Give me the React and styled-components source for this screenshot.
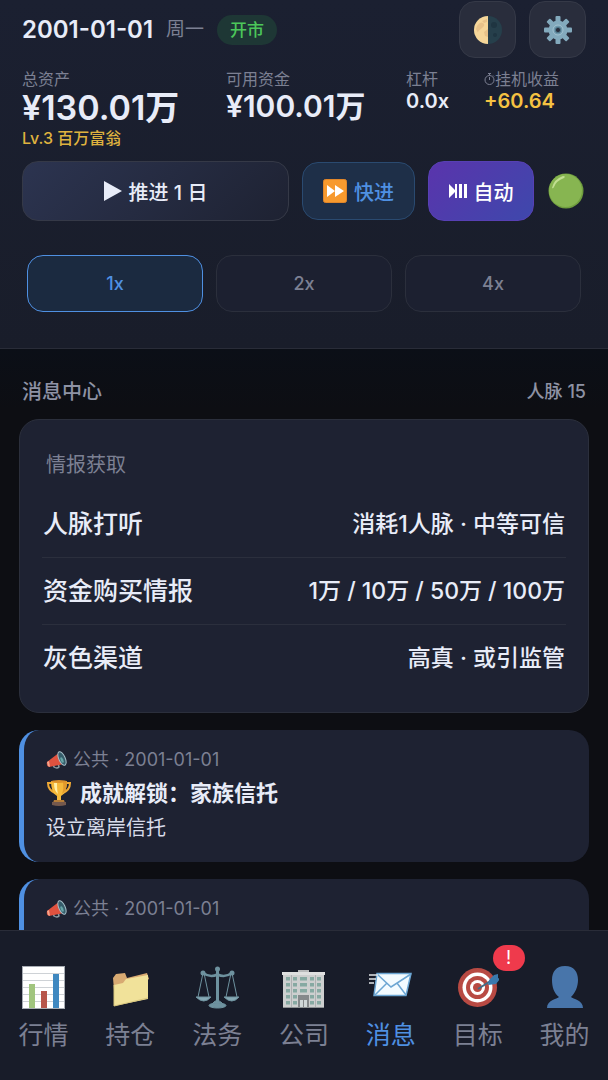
import React, { useState } from "react";
import styled, { createGlobalStyle, css } from "styled-components";

const GlobalStyle = createGlobalStyle`
	* {
		box-sizing: border-box;
	}
	body {
		margin: 0;
		background: #0d0e13;
		color: #e8ecf8;
		font-family: Inter, "Noto Sans CJK SC", sans-serif;
	}
	button {
		font-family: inherit;
		cursor: pointer;
	}
	svg {
		display: block;
		flex-shrink: 0;
	}
`;

const Page = styled.div`
	display: flex;
	flex-direction: column;
	height: 100vh;
	background: #0d0e13;
`;

const Header = styled.header`
	display: flex;
	flex-direction: column;
	flex-shrink: 0;
	padding: 1px 22px 36px;
	background: linear-gradient(#1b2031, #191d2a);
	border-bottom: 1px solid #292c38;
`;

const TopRow = styled.div`
	display: flex;
	align-items: center;
	gap: 13px;
`;

const DateText = styled.h1`
	margin: 0;
	font-size: 24px;
	font-weight: 600;
	line-height: 30px;
`;

const Weekday = styled.span`
	color: #7c8093;
	font-size: 19px;
	line-height: 30px;
`;

const MarketTag = styled.span`
	padding: 0 13px;
	border-radius: 15px;
	background: #1e3735;
	color: #4cc75a;
	font-size: 17px;
	font-weight: 500;
	line-height: 30px;
`;

const TopActions = styled.div`
	display: flex;
	gap: 13px;
	margin-left: auto;
`;

const IconButton = styled.button`
	display: flex;
	align-items: center;
	justify-content: center;
	width: 57px;
	height: 57px;
	padding: 0;
	border: 1px solid #353947;
	border-radius: 16px;
	background: #292d3c;
`;

const Stats = styled.dl`
	display: grid;
	grid-template-columns: 204fr 180fr 78fr 102fr;
	margin: 11px 0 0;
`;

const Stat = styled.div`
	white-space: nowrap;
`;

const StatLabel = styled.dt`
	display: flex;
	align-items: center;
	color: #7c8093;
	font-size: 16px;
	line-height: 20px;
`;

const valueSizes = {
	large: css`
		font-size: 34px;
		line-height: 37px;
	`,
	medium: css`
		font-size: 30px;
		line-height: 34px;
	`,
	small: css`
		font-size: 20px;
		line-height: 24px;
	`,
};

const StatValue = styled.dd`
	margin: 0;
	font-weight: 600;
	color: ${props => (props.$gold ? "#f5c242" : "#e8ecf8")};
	${props => valueSizes[props.$size]};
`;

const Level = styled.dd`
	margin: 0;
	color: #dfb23f;
	font-size: 16px;
	font-weight: 500;
	line-height: 24px;
`;

const Controls = styled.div`
	display: flex;
	align-items: center;
	gap: 13px;
	margin-top: 11px;
`;

const controlLooks = {
	step: css`
		flex: 1;
		border-color: #353947;
		background: linear-gradient(135deg, #2c3450, #1e2232);
		color: #e8ecf8;
	`,
	fast: css`
		width: 113px;
		height: 58px;
		border-color: #2a4a70;
		background: #1e2f48;
		color: #4f90e2;
	`,
	auto: css`
		width: 106px;
		border-color: #5740b4;
		background: linear-gradient(135deg, #5a34ac, #3e48ac);
		color: #ffffff;
	`,
};

const ControlButton = styled.button`
	display: flex;
	align-items: center;
	justify-content: center;
	gap: 7px;
	height: 60px;
	padding: 0;
	border: 1px solid;
	border-radius: 16px;
	font-size: 20px;
	font-weight: 500;
	white-space: nowrap;
	${props => controlLooks[props.$look]};
`;

const StatusButton = styled.button`
	width: 39px;
	padding: 0 1px;
	border: 0;
	background: none;
`;

const Speeds = styled.div`
	display: flex;
	gap: 13px;
	margin-top: 34px;
	padding: 0 5px;
`;

const SpeedButton = styled.button`
	flex: 1;
	height: 57px;
	border: 1px solid ${props => (props.$active ? "#4f90e2" : "#2b2f3c")};
	border-radius: 16px;
	background: ${props => (props.$active ? "#1b2a40" : "#1c2030")};
	color: ${props => (props.$active ? "#4f90e2" : "#7c8093")};
	font-size: 18px;
	font-weight: 500;
`;

const Main = styled.main`
	display: flex;
	flex: 1;
	flex-direction: column;
	gap: 17px;
	min-height: 0;
	padding: 28px 19px 0;
	overflow-y: auto;
	scrollbar-width: none;
	background: linear-gradient(#0b0f17, #0d0e13 60px);
`;

const SectionHead = styled.div`
	display: flex;
	align-items: center;
	justify-content: space-between;
	margin-bottom: -5px;
	padding: 0 3px;
	color: #8e92a4;
`;

const SectionTitle = styled.h2`
	margin: 0;
	font-size: 20px;
	font-weight: 500;
	line-height: 30px;
`;

const Contacts = styled.span`
	font-size: 18px;
	font-weight: 500;
	line-height: 30px;
`;

const Panel = styled.section`
	flex-shrink: 0;
	padding: 30px 22px 20px;
	border: 1px solid #2b2f3c;
	border-radius: 20px;
	background: #1e2232;
`;

const PanelTitle = styled.h3`
	margin: 0;
	padding: 0 4px 11px;
	color: #7c8093;
	font-size: 20px;
	font-weight: 400;
	line-height: 30px;
`;

const IntelRow = styled.button`
	display: flex;
	align-items: center;
	justify-content: space-between;
	width: 100%;
	height: 67px;
	padding: 0 1px 4px;
	border: 0;
	border-bottom: 1px solid #2b2f3d;
	background: none;
	color: #e8ecf8;
	font-size: 25px;
	font-weight: 500;
	&:last-child {
		border-bottom-color: transparent;
	}
`;

const IntelNote = styled.span`
	font-size: 23px;
`;

const Message = styled.article`
	display: flex;
	flex-direction: column;
	flex-shrink: 0;
	min-height: 132px;
	padding: 16px 22px 18px;
	border-left: 5px solid #4f90e2;
	border-radius: 20px;
	background: #1e2232;
`;

const MessageMeta = styled.div`
	display: flex;
	align-items: center;
	gap: 6px;
	color: #7c8093;
	font-size: 18px;
	line-height: 28px;
`;

const MessageTitle = styled.h3`
	display: flex;
	align-items: center;
	gap: 8px;
	margin: 0;
	font-size: 22px;
	font-weight: 600;
	line-height: 38px;
`;

const MessageBody = styled.p`
	margin: 0;
	color: #d8dcea;
	font-size: 20px;
	line-height: 32px;
`;

const TabBar = styled.nav`
	display: grid;
	grid-template-columns: repeat(7, 1fr);
	flex-shrink: 0;
	padding: 35px 0 27px;
	border-top: 1px solid #292c38;
	background: #181c29;
`;

const Tab = styled.a`
	display: flex;
	flex-direction: column;
	align-items: center;
	gap: 9px;
	position: relative;
	color: ${props => (props.$active ? "#4f90e2" : "#7c8093")};
	font-size: 25px;
	line-height: 35px;
	text-decoration: none;
`;

const Badge = styled.span`
	position: absolute;
	top: -21px;
	left: calc(50% + 15px);
	width: 32px;
	border-radius: 13px;
	background: #ef3a4c;
	color: #ffffff;
	font-size: 18px;
	line-height: 26px;
	text-align: center;
`;

const MoonIcon = () => (
	<svg width="28" height="28" viewBox="0 0 28 28">
		<circle cx="14" cy="14" r="14" fill="#263f4b" />
		<path d="M14 0a14 14 0 0 0 0 28z" fill="#f6d699" />
		<path d="M3 10q3-5 6-3t-1 5-4 4-2-3zM10 16l4-3v8l-3-1zM8 5l5-2v3l-3 1z" fill="#e8c289" />
		<circle cx="20" cy="9" r="3" fill="#1f3541" />
		<circle cx="21" cy="19" r="2" fill="#1f3541" />
	</svg>
);

const GearIcon = () => (
	<svg width="28" height="28" viewBox="0 0 28 28">
		<g fill="#83aabd">
			{[ 0, 45, 90, 135 ].map(angle => (
				<rect key={angle} x="11.5" y="0" width="5" height="28" rx="1" transform={`rotate(${angle} 14 14)`} />
			))}
			<circle cx="14" cy="14" r="9.5" />
		</g>
		<circle cx="14" cy="14" r="5" fill="#6e98ad" stroke="#a5c5d2" strokeWidth="1" />
		<circle cx="14" cy="14" r="2.6" fill="#292d3c" stroke="#4f7688" strokeWidth="1" />
	</svg>
);

const StopwatchIcon = () => (
	<svg width="11" height="16" viewBox="0 0 11 16" fill="none" stroke="#7c8093" strokeWidth="1">
		<circle cx="5.5" cy="9" r="4.5" />
		<path d="M5.5 9V6M4 2.5h3M5.5 2.5v2M9 4.5l1 1" />
	</svg>
);

const PlayIcon = () => (
	<svg width="18" height="20" viewBox="0 0 18 20" fill="currentColor">
		<path d="M0 0l18 10L0 20z" />
	</svg>
);

const FastIcon = () => (
	<svg width="24" height="24" viewBox="0 0 24 24">
		<rect x="0.5" y="0.5" width="23" height="23" rx="2" fill="#f79a2e" stroke="#e0862a" />
		<path d="M4 6l8 6-8 6zM12 6l9 6-9 6z" fill="#fff" />
	</svg>
);

const PlayPauseIcon = () => (
	<svg width="18" height="14" viewBox="0 0 18 14" fill="currentColor">
		<path d="M0 0l6 6V0h2v14H6V8l-6 6zM10 0h3v14h-3zM15 0h3v14h-3z" />
	</svg>
);

const GreenDot = () => (
	<svg width="36" height="36" viewBox="0 0 36 36">
		<circle cx="18" cy="18" r="17.5" fill="#6f9d3e" />
		<circle cx="17.5" cy="17.5" r="16.5" fill="#87b551" />
		<path d="M4 15Q6 6 15 3q3 0 1 2Q8 8 6 14q-1 2-2 1z" fill="#c2df92" />
	</svg>
);

const HornIcon = () => (
	<svg width="21" height="18" viewBox="0 0 21 18">
		<path d="M7 13l1 3q3 2 5 0l-1-4" fill="none" stroke="#8d9ca3" strokeWidth="1.5" />
		<path d="M1 11L14 1l4 12-15 3q-3-1-2-5z" fill="#e0523f" />
		<path d="M1 11l1 4 2 1-1-6z" fill="#f4a58c" />
		<ellipse cx="16" cy="7.5" rx="3.2" ry="7.3" transform="rotate(-24 16 7.5)" fill="#365d6b" stroke="#a6bfc9" strokeWidth="1" />
		<ellipse cx="16" cy="9" rx="1.3" ry="3" transform="rotate(-24 16 9)" fill="#67a7a8" />
	</svg>
);

const TrophyIcon = () => (
	<svg width="26" height="26" viewBox="0 0 26 26">
		<path d="M6 3H2q0 7 7 10M20 3h4q0 7-7 10" fill="none" stroke="#eea834" strokeWidth="2" />
		<path d="M5 1h16q0 12-6 15v5h-4v-5Q5 13 5 1z" fill="#f6ba3b" />
		<path d="M8 3h3q0 8 1 11-4-3-4-11z" fill="#fff0a8" />
		<path d="M17 2h4q0 9-5 12 2-5 1-12z" fill="#e29a2c" />
		<ellipse cx="13" cy="1.5" rx="8" ry="1.5" fill="#dc922c" />
		<path d="M8 20h10l1 3H7z" fill="#b57d38" />
		<path d="M6 22h14v3q-7 2-14 0z" fill="#75594d" />
	</svg>
);

const ChartIcon = () => (
	<svg width="43" height="43" viewBox="0 0 43 43">
		<rect x="0.5" y="0.5" width="42" height="42" fill="#fff" stroke="#a7acb3" />
		<path d="M1 7.5h41M1 14.5h41M1 21.5h41M1 28.5h41M1 35.5h41" stroke="#ced2d6" />
		<rect x="7" y="18" width="6" height="24" fill="#a1c57e" />
		<rect x="19" y="25" width="6" height="17" fill="#b7564b" />
		<rect x="31" y="8" width="6" height="34" fill="#3f88c0" />
	</svg>
);

const FolderIcon = () => (
	<svg width="43" height="43" viewBox="0 0 43 43">
		<path d="M4 12l3-4 9-1 2 5 20-5 2 6-34 23z" fill="#d8aa72" />
		<path d="M5 19l9-2 3-4 22-4v24L5 40z" fill="#f1e29a" />
		<path d="M5 19v21l34-8" fill="none" stroke="#d9c77e" />
	</svg>
);

const ScalesIcon = () => (
	<svg width="43" height="43" viewBox="0 0 43 43" fill="none" stroke="#6e929f">
		<path d="M21.5 3v34" strokeWidth="3" />
		<path d="M7 7q7 5 14.5 1.5Q29 12 36 7" strokeWidth="2.5" />
		<path d="M7 7L2 31M8 7l5 24M35 7l-5 24M36 7l5 24" strokeWidth="1" />
		<path d="M0 31h15q-7 8-15 0zM28 31h15q-7 8-15 0z" fill="#86a9b4" strokeWidth="1" />
		<ellipse cx="21.5" cy="39.5" rx="8.5" ry="2.5" fill="#6e929f" />
		<path d="M17 37q4-5 9 0z" fill="#6e929f" />
		<g fill="#6e929f" stroke="none">
			<circle cx="21.5" cy="3" r="2.5" />
			<circle cx="7" cy="7" r="2.5" />
			<circle cx="36" cy="7" r="2.5" />
		</g>
	</svg>
);

const windowColumns = [ { x: 4, w: 4 }, { x: 11, w: 4 }, { x: 18, w: 7 }, { x: 28, w: 4 }, { x: 35, w: 4 } ];

const OfficeIcon = () => (
	<svg width="43" height="43" viewBox="0 0 43 43">
		<path d="M16 4h11v4H16z" fill="#b8babb" />
		<path d="M1 8h41v34H1z" fill="#cdcfcf" />
		<path d="M9 8h1v34H9zM33 8h1v34h-1z" fill="#aeb1b2" />
		<path d="M0 6h43v3H0z" fill="#dedfdf" />
		{[ 11, 17, 23, 29, 35 ].map(y =>
			windowColumns.map(({ x, w }) => <rect key={`${x}-${y}`} x={x} y={y} width={w} height="3.5" fill="#86a9a2" />)
		)}
		<path d="M16 29h11v13H16z" fill="#85898b" />
		<path d="M18 34h3v8h-3zM22 34h3v8h-3z" fill="#d0d7d8" />
		<path d="M1 41h41v1H1z" fill="#8d9193" />
	</svg>
);

const MailIcon = () => (
	<svg width="43" height="43" viewBox="0 0 43 43">
		<path d="M8 7.5h34l-5 22H5z" fill="#f3fbff" stroke="#6ca6d3" strokeWidth="1.5" />
		<path d="M8 8l14 13L42 8M6 29l12-12M37 29L28 17" fill="none" stroke="#6ca6d3" strokeWidth="1.5" />
		<path d="M0 9h9M0 13h7M0 17h5" stroke="#e1e5e8" strokeWidth="1.5" />
	</svg>
);

const TargetIcon = () => (
	<svg width="43" height="43" viewBox="0 0 43 43">
		<circle cx="21.5" cy="21.5" r="19.5" fill="#b84a43" />
		<circle cx="21.5" cy="21.5" r="15" fill="#fff" />
		<circle cx="21.5" cy="21.5" r="11.5" fill="#b84a43" />
		<circle cx="21.5" cy="21.5" r="7.5" fill="#fff" />
		<circle cx="21.5" cy="21.5" r="4.5" fill="#b84a43" />
		<path d="M22 23l14-9" stroke="#416b87" strokeWidth="2" />
		<path d="M33 14l5-5 4-1v4l2 1-4 5-8 1z" fill="#3a79ad" />
	</svg>
);

const PersonIcon = () => (
	<svg width="43" height="43" viewBox="0 0 43 43">
		<path d="M22 0c9 0 13 6 13 14 0 7-3 13-7 17 2 2 12 3 12 11H4c0-8 10-9 12-11-5-4-7-10-7-17C9 6 13 0 22 0z" fill="#4875aa" />
	</svg>
);

const speeds = [ "1x", "2x", "4x" ];

const intel = [
	{ name: "人脉打听", note: "消耗1人脉 · 中等可信" },
	{ name: "资金购买情报", note: "1万 / 10万 / 50万 / 100万" },
	{ name: "灰色渠道", note: "高真 · 或引监管" },
];

const messages = [
	{ id: 1, meta: "公共 · 2001-01-01", title: "成就解锁：家族信托", body: "设立离岸信托" },
	{ id: 2, meta: "公共 · 2001-01-01" },
];

const tabs = [
	{ name: "行情", Icon: ChartIcon },
	{ name: "持仓", Icon: FolderIcon },
	{ name: "法务", Icon: ScalesIcon },
	{ name: "公司", Icon: OfficeIcon },
	{ name: "消息", Icon: MailIcon },
	{ name: "目标", Icon: TargetIcon, badge: "!" },
	{ name: "我的", Icon: PersonIcon },
];

const App = () => {
	const [ speed, setSpeed ] = useState("1x");
	const [ tab, setTab ] = useState("消息");
	return (
		<Page>
			<GlobalStyle />
			<Header>
				<TopRow>
					<DateText>2001-01-01</DateText>
					<Weekday>周一</Weekday>
					<MarketTag>开市</MarketTag>
					<TopActions>
						<IconButton aria-label="主题">
							<MoonIcon />
						</IconButton>
						<IconButton aria-label="设置">
							<GearIcon />
						</IconButton>
					</TopActions>
				</TopRow>
				<Stats>
					<Stat>
						<StatLabel>总资产</StatLabel>
						<StatValue $size="large">¥130.01万</StatValue>
						<Level>Lv.3 百万富翁</Level>
					</Stat>
					<Stat>
						<StatLabel>可用资金</StatLabel>
						<StatValue $size="medium">¥100.01万</StatValue>
					</Stat>
					<Stat>
						<StatLabel>杠杆</StatLabel>
						<StatValue $size="small">0.0x</StatValue>
					</Stat>
					<Stat>
						<StatLabel>
							<StopwatchIcon />
							挂机收益
						</StatLabel>
						<StatValue $size="small" $gold>
							+60.64
						</StatValue>
					</Stat>
				</Stats>
				<Controls>
					<ControlButton $look="step">
						<PlayIcon />
						推进 1 日
					</ControlButton>
					<ControlButton $look="fast">
						<FastIcon />
						快进
					</ControlButton>
					<ControlButton $look="auto">
						<PlayPauseIcon />
						自动
					</ControlButton>
					<StatusButton aria-label="状态">
						<GreenDot />
					</StatusButton>
				</Controls>
				<Speeds>
					{speeds.map(item => (
						<SpeedButton key={item} $active={item === speed} onClick={() => setSpeed(item)}>
							{item}
						</SpeedButton>
					))}
				</Speeds>
			</Header>
			<Main>
				<SectionHead>
					<SectionTitle>消息中心</SectionTitle>
					<Contacts>人脉 15</Contacts>
				</SectionHead>
				<Panel>
					<PanelTitle>情报获取</PanelTitle>
					{intel.map(item => (
						<IntelRow key={item.name}>
							{item.name}
							<IntelNote>{item.note}</IntelNote>
						</IntelRow>
					))}
				</Panel>
				{messages.map(item => (
					<Message key={item.id}>
						<MessageMeta>
							<HornIcon />
							{item.meta}
						</MessageMeta>
						{item.title && (
							<MessageTitle>
								<TrophyIcon />
								{item.title}
							</MessageTitle>
						)}
						{item.body && <MessageBody>{item.body}</MessageBody>}
					</Message>
				))}
			</Main>
			<TabBar>
				{tabs.map(({ name, Icon, badge }) => (
					<Tab key={name} href="#" $active={name === tab} onClick={() => setTab(name)}>
						<Icon />
						{name}
						{badge && <Badge>{badge}</Badge>}
					</Tab>
				))}
			</TabBar>
		</Page>
	);
};

export default App;
